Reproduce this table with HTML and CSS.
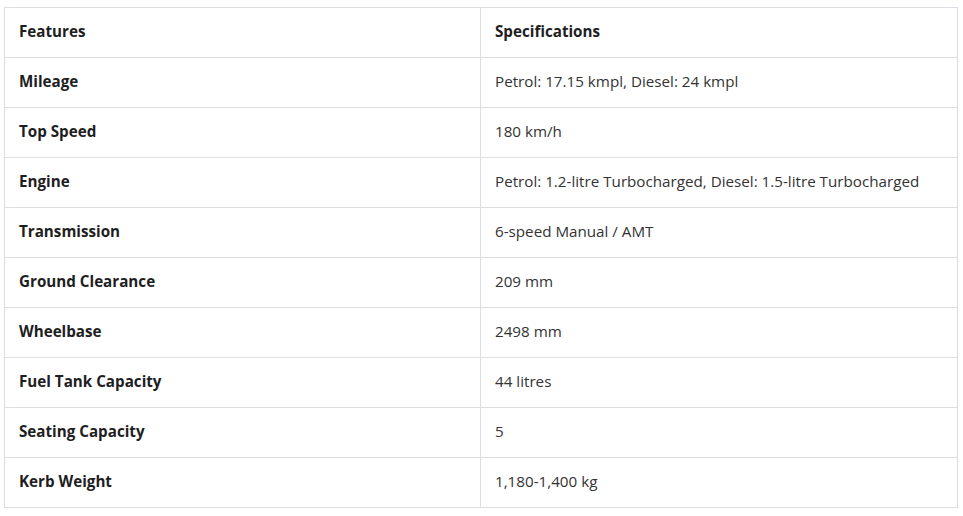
FILE: index.html
```html
<!DOCTYPE html>
<html>
<head>
<meta charset="utf-8">
<link rel="stylesheet" href="styles.css">
</head>
<body>
<table class="spec-table">
  <tbody>
    <tr><th>Features</th><th>Specifications</th></tr>
    <tr><td class="feat">Mileage</td><td>Petrol: 17.15 kmpl, Diesel: 24 kmpl</td></tr>
    <tr><td class="feat">Top Speed</td><td>180 km/h</td></tr>
    <tr><td class="feat">Engine</td><td>Petrol: 1.2-litre Turbocharged, Diesel: 1.5-litre Turbocharged</td></tr>
    <tr><td class="feat">Transmission</td><td>6-speed Manual / AMT</td></tr>
    <tr><td class="feat">Ground Clearance</td><td>209 mm</td></tr>
    <tr><td class="feat">Wheelbase</td><td>2498 mm</td></tr>
    <tr><td class="feat">Fuel Tank Capacity</td><td>44 litres</td></tr>
    <tr><td class="feat">Seating Capacity</td><td>5</td></tr>
    <tr><td class="feat">Kerb Weight</td><td>1,180-1,400 kg</td></tr>
  </tbody>
</table>
</body>
</html>
```
FILE: styles.css
```css
html, body {
  margin: 0;
  padding: 0;
  background: #ffffff;
}
body {
  padding: 7px 5px 0 4px;
  font-family: "Open Sans", "Liberation Sans", sans-serif;
  font-size: 15.2px;
  color: #2b2b2b;
}
.spec-table {
  width: 954px;
  border-collapse: collapse;
  table-layout: fixed;
}
.spec-table th,
.spec-table td {
  border: 1px solid #dcdde3;
  height: 50px;
  padding: 0 14px 3px 14px;
  text-align: left;
  vertical-align: middle;
  box-sizing: border-box;
}
.spec-table th:first-child,
.spec-table td:first-child {
  width: 476px;
}
.spec-table th,
.spec-table td.feat {
  font-weight: 700;
  color: #1e1e22;
}
.spec-table td {
  font-weight: 400;
  color: #333333;
}
```
